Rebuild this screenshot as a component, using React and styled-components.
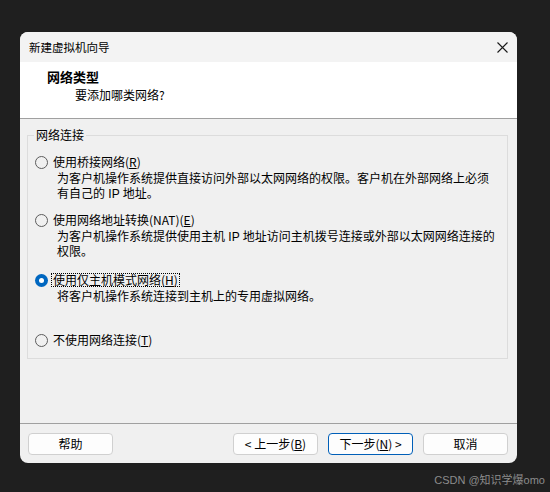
import React from "react";
import styled, { createGlobalStyle, css } from "styled-components";

const GlobalStyle = createGlobalStyle`
  html, body { margin: 0; padding: 0; background: #1f1f1f; }
  body { font-family: "Noto Sans CJK SC", sans-serif; color: #000; }
  * { box-sizing: border-box; }
`;

const Page = styled.div`
  width: 550px;
  height: 492px;
  padding: 32px 0 0 20px;
  display: flex;
  flex-direction: column;
  overflow: hidden;
`;

const Dialog = styled.div`
  width: 497px;
  height: 431px;
  background: #f0f0f0;
  border-radius: 8px;
  overflow: hidden;
  display: flex;
  flex-direction: column;
`;

const TitleBar = styled.div`
  height: 30px;
  flex: none;
  background: #f3f3f3;
  display: flex;
  align-items: center;
  justify-content: space-between;
  padding: 0 9px 0 9px;
  font-size: 11.5px;
  line-height: 16px;
`;

const Header = styled.div`
  height: 57px;
  flex: none;
  background: #fff;
  border-bottom: 1px solid #a0a0a0;
  padding: 7px 0 0 27px;
`;

const HeaderTitle = styled.div`
  font-size: 13px;
  font-weight: bold;
  line-height: 16px;
`;

const HeaderSub = styled.div`
  font-size: 12px;
  line-height: 16px;
  margin: 2px 0 0 28px;
`;

const Body = styled.div`
  flex: 1;
  padding: 16px 9px 0 7px;
`;

const Group = styled.div`
  height: 224px;
  border: 1px solid #dcdcdc;
  display: flex;
  flex-direction: column;
  padding: 0 0 0 7px;
`;

const GroupLabel = styled.div`
  align-self: flex-start;
  margin: -8px 0 0 -1px;
  padding: 0 2px;
  background: #f0f0f0;
  font-size: 12px;
  line-height: 14px;
`;

const Option = styled.div`
  display: flex;
  flex-direction: column;
  margin-top: ${(p) => p.$gap}px;
`;

const Row = styled.div`
  display: flex;
  align-items: center;
  height: 16px;
`;

const Radio = styled.span`
  width: 13px;
  height: 13px;
  border-radius: 50%;
  flex: none;
  display: flex;
  align-items: center;
  justify-content: center;
  ${(p) =>
    p.$checked
      ? css`
          background: #0067c0;
          &::after {
            content: "";
            width: 5px;
            height: 5px;
            border-radius: 50%;
            background: #fff;
          }
        `
      : css`
          border: 1px solid #5c5c5c;
          background: #f0f0f0;
        `}
`;

const RadioText = styled.span`
  margin-left: 3px;
  padding: 0 1px;
  border: 1px dotted ${(p) => (p.$focused ? "#000" : "transparent")};
  font-size: 12px;
  line-height: 12px;
  white-space: nowrap;
`;

const Key = styled.span`
  text-decoration: underline;
  text-underline-offset: 1px;
`;

const Desc = styled.div`
  margin: 2px 0 0 22px;
  font-family: "Liberation Sans", "Noto Sans CJK SC", sans-serif;
  font-size: 12px;
  line-height: 15px;
  white-space: nowrap;
`;

const Footer = styled.div`
  height: 40px;
  flex: none;
  border-top: 1px solid #a0a0a0;
  padding: 9px 9px 0 8px;
  display: flex;
  gap: 10px;
`;

const Spacer = styled.div`
  flex: 1;
`;

const Button = styled.button`
  width: 85px;
  height: 22px;
  padding: 0;
  border: 1px solid ${(p) => (p.$primary ? "#005fb8" : "#d0d0d0")};
  border-radius: 4px;
  background: #fdfdfd;
  font-family: "Noto Sans CJK SC", sans-serif;
  font-size: 12px;
  line-height: 20px;
  color: #000;
`;

const Watermark = styled.div`
  align-self: flex-end;
  margin: 10px 5px 0 0;
  font-family: "Liberation Sans", "Noto Sans CJK SC", sans-serif;
  font-size: 11px;
  line-height: 14px;
  color: #8c8c8c;
`;

const CloseIcon = () => (
  <svg width="11" height="11" viewBox="0 0 11 11">
    <path d="M0.5 0.5L10.5 10.5M10.5 0.5L0.5 10.5" stroke="#1a1a1a" strokeWidth="1.1" fill="none" />
  </svg>
);

const options = [
  {
    gap: 12,
    label: "使用桥接网络(",
    key: "R",
    desc: ["为客户机操作系统提供直接访问外部以太网网络的权限。客户机在外部网络上必须", "有自己的 IP 地址。"],
  },
  {
    gap: 10,
    label: "使用网络地址转换(NAT)(",
    key: "E",
    desc: ["为客户机操作系统提供使用主机 IP 地址访问主机拨号连接或外部以太网网络连接的", "权限。"],
  },
  {
    gap: 12,
    label: "使用仅主机模式网络(",
    key: "H",
    checked: true,
    desc: ["将客户机操作系统连接到主机上的专用虚拟网络。"],
  },
  { gap: 27, label: "不使用网络连接(", key: "T", desc: [] },
];

export default function App() {
  return (
    <>
      <GlobalStyle />
      <Page>
        <Dialog>
          <TitleBar>
            <span>新建虚拟机向导</span>
            <CloseIcon />
          </TitleBar>
          <Header>
            <HeaderTitle>网络类型</HeaderTitle>
            <HeaderSub>要添加哪类网络?</HeaderSub>
          </Header>
          <Body>
            <Group>
              <GroupLabel>网络连接</GroupLabel>
              {options.map((o) => (
                <Option key={o.key} $gap={o.gap}>
                  <Row>
                    <Radio $checked={o.checked} />
                    <RadioText $focused={o.checked}>
                      {o.label}
                      <Key>{o.key}</Key>)
                    </RadioText>
                  </Row>
                  {o.desc.length > 0 && (
                    <Desc>
                      {o.desc.map((line, i) => (
                        <div key={i}>{line}</div>
                      ))}
                    </Desc>
                  )}
                </Option>
              ))}
            </Group>
          </Body>
          <Footer>
            <Button>帮助</Button>
            <Spacer />
            <Button>
              &lt; 上一步(<Key>B</Key>)
            </Button>
            <Button $primary>
              下一步(<Key>N</Key>) &gt;
            </Button>
            <Button>取消</Button>
          </Footer>
        </Dialog>
        <Watermark>CSDN @知识学爆omo</Watermark>
      </Page>
    </>
  );
}
